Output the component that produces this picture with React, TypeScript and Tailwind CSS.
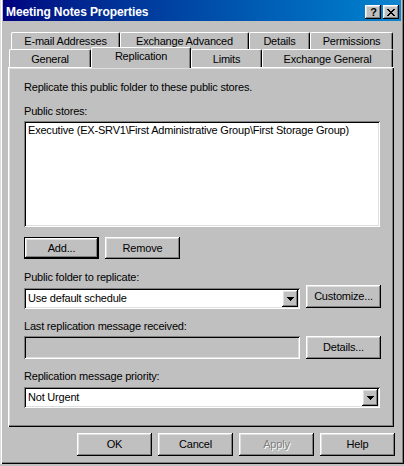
import React from "react";

const RAISED =
  "shadow-[inset_-1px_-1px_0_#000,inset_1px_1px_0_#fff,inset_-2px_-2px_0_#808080,inset_2px_2px_0_#dfdfdf]";
const SUNKEN =
  "shadow-[inset_1px_1px_0_#808080,inset_-1px_-1px_0_#fff,inset_2px_2px_0_#000,inset_-2px_-2px_0_#dfdfdf]";

function Btn({
  children,
  className = "",
  def = false,
  disabled = false,
}: {
  children: React.ReactNode;
  className?: string;
  def?: boolean;
  disabled?: boolean;
}) {
  return (
    <div
      className={`flex items-center justify-center bg-[#c0c0c0] ${
        def ? "border border-black" : ""
      } ${RAISED} ${
        disabled ? "text-[#808080] [text-shadow:1px_1px_0_#fff]" : "text-black"
      } ${className}`}
    >
      {children}
    </div>
  );
}

function Arrow() {
  return (
    <svg width="7" height="4" viewBox="0 0 7 4" shapeRendering="crispEdges">
      <path d="M0 0h7v1H0zM1 1h5v1H1zM2 2h3v1H2zM3 3h1v1H3z" fill="#000" />
    </svg>
  );
}

function Combo({ text, className = "" }: { text: string; className?: string }) {
  return (
    <div className={`flex items-center bg-white p-[2px] ${SUNKEN} ${className}`}>
      <div className="flex-1 pl-[2px] leading-[13px]">{text}</div>
      <div className={`w-[16px] h-full flex items-center justify-center bg-[#c0c0c0] ${RAISED}`}>
        <Arrow />
      </div>
    </div>
  );
}

function BackTab({ label, className }: { label: string; className: string }) {
  return (
    <div
      className={`h-[17px] border-l border-t border-r border-l-white border-t-white border-r-black rounded-t-[2px] shadow-[inset_-1px_0_0_#808080] text-center pt-[2px] ${className}`}
    >
      {label}
    </div>
  );
}

function FrontTab({ label, className }: { label: string; className: string }) {
  return (
    <div
      className={`mt-[2px] h-[18px] border-l border-t border-r border-l-white border-t-white border-r-black rounded-t-[2px] shadow-[inset_-1px_0_0_#808080] text-center pt-[3px] ${className}`}
    >
      {label}
    </div>
  );
}

export default function App() {
  return (
    <div className="w-[404px] h-[466px] overflow-hidden bg-[#c0c0c0] text-black text-[11px] leading-[13px] tracking-[-0.2px] font-['Liberation_Sans',Arial,sans-serif]">
      <div className="h-[464px] flex flex-col shadow-[inset_1px_0_0_#dfdfdf,inset_2px_0_0_#fff,inset_-1px_-1px_0_#000,inset_-2px_-2px_0_#808080]">
        {/* Title bar */}
        <div className="mx-[3px] h-[21px] pt-[3px] pl-[3px] pr-[2px] flex items-center bg-linear-to-r from-[#000080] to-[#1084d0]">
          <div className="flex-1 text-white font-bold text-[12px] tracking-[-0.1px] leading-[14px]">
            Meeting Notes Properties
          </div>
          <div className="flex gap-[2px]">
            <div className={`w-[16px] h-[14px] flex items-center justify-center bg-[#c0c0c0] ${RAISED}`}>
              <span className="font-bold text-[11px] leading-[11px] tracking-normal pl-[1px]">?</span>
            </div>
            <div className={`w-[16px] h-[14px] flex items-center justify-center bg-[#c0c0c0] ${RAISED}`}>
              <svg width="8" height="7" viewBox="0 0 8 7" shapeRendering="crispEdges">
                <path
                  d="M0 0h2v1H0zM6 0h2v1H6zM1 1h2v1H1zM5 1h2v1H5zM2 2h4v1H2zM3 3h2v1H3zM2 4h4v1H2zM1 5h2v1H1zM5 5h2v1H5zM0 6h2v1H0zM6 6h2v1H6z"
                  fill="#000"
                />
              </svg>
            </div>
          </div>
        </div>

        {/* Tabs row 1 */}
        <div className="mt-[11px] h-[17px] flex pl-[11px]">
          <BackTab label="E-mail Addresses" className="w-[109px]" />
          <BackTab label="Exchange Advanced" className="w-[129px]" />
          <BackTab label="Details" className="w-[61px]" />
          <BackTab label="Permissions" className="w-[83px]" />
        </div>
        {/* Tabs row 2 */}
        <div className="-mt-[2px] h-[20px] flex items-start pl-[9px]">
          <FrontTab label="General" className="w-[82px]" />
          <div className="relative z-10 w-[100px] h-[21px] bg-[#c0c0c0] border-l border-t border-r border-l-white border-t-white border-r-black rounded-t-[2px] shadow-[inset_-1px_0_0_#808080] text-center pt-[2px]">
            Replication
          </div>
          <FrontTab label="Limits" className="w-[71px]" />
          <FrontTab label="Exchange General" className="w-[131px]" />
        </div>

        {/* Panel */}
        <div className="relative ml-[8px] w-[386px] h-[360px] pl-[16px] pt-[14px] flex flex-col items-start shadow-[inset_1px_1px_0_#fff,inset_-1px_-1px_0_#000,inset_-2px_-2px_0_#808080,inset_2px_2px_0_#dfdfdf]">
          <p>Replicate this public folder to these public stores.</p>
          <p className="mt-[11px]">Public stores:</p>
          <div className={`mt-[3px] w-[356px] h-[106px] bg-white pl-[4px] pt-[3px] ${SUNKEN}`}>
            Executive (EX-SRV1\First Administrative Group\First Storage Group)
          </div>
          <div className="mt-[10px] flex gap-[6px]">
            <Btn def className="w-[75px] h-[22px]">
              Add...
            </Btn>
            <Btn className="w-[75px] h-[22px]">Remove</Btn>
          </div>
          <p className="mt-[12px]">Public folder to replicate:</p>
          <div className="mt-[1px] flex items-start gap-[6px]">
            <Combo text="Use default schedule" className="mt-[3px] w-[276px] h-[21px]" />
            <Btn className="w-[75px] h-[23px]">Customize...</Btn>
          </div>
          <p className="mt-[11px]">Last replication message received:</p>
          <div className="mt-[3px] flex gap-[6px]">
            <div className={`w-[276px] h-[23px] bg-[#c0c0c0] ${SUNKEN}`} />
            <Btn className="w-[75px] h-[23px]">Details...</Btn>
          </div>
          <p className="mt-[11px]">Replication message priority:</p>
          <Combo text="Not Urgent" className="mt-[4px] w-[356px] h-[21px]" />
        </div>

        {/* Bottom buttons */}
        <div className="mt-[6px] flex gap-[6px] pl-[77px]">
          <Btn className="w-[75px] h-[23px]">OK</Btn>
          <Btn className="w-[75px] h-[23px]">Cancel</Btn>
          <Btn disabled className="w-[75px] h-[23px]">
            Apply
          </Btn>
          <Btn className="w-[75px] h-[23px]">Help</Btn>
        </div>
      </div>
    </div>
  );
}
